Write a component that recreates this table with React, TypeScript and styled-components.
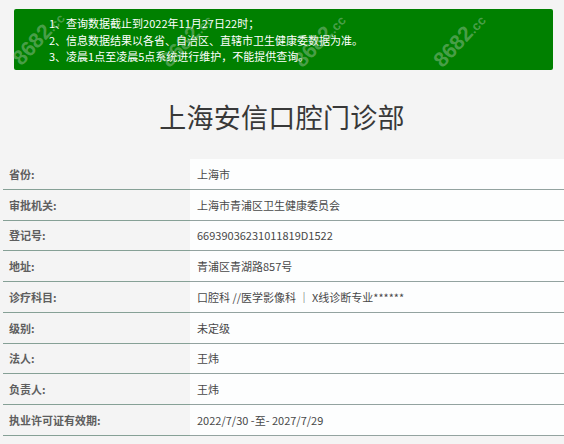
import React from "react";
import styled, { createGlobalStyle } from "styled-components";

const Global = createGlobalStyle`
  html, body { margin: 0; padding: 0; background: #f4f4f4; }
  body { font-family: "Microsoft YaHei", "Noto Sans CJK SC", "Noto Sans", sans-serif; overflow: hidden; }
`;

const Page = styled.div`
  position: relative;
  width: 564px;
  height: 444px;
  background: #f4f4f4;
  overflow: hidden;
`;

const Notice = styled.div`
  margin: 9px 11px 0 14px;
  height: 61px;
  box-sizing: border-box;
  background: #008000;
  border-radius: 2px;
  padding: 6px 0 0 35px;
  color: #ffffff;
  font-size: 11px;
  line-height: 16.5px;
`;

const NoticeLine = styled.div`
  white-space: nowrap;
`;

const Title = styled.h1`
  margin: 0;
  padding: 27px 0 0;
  height: 89px;
  box-sizing: border-box;
  text-align: center;
  font-weight: 400;
  font-size: 27px;
  line-height: 40px;
  color: #383838;
  letter-spacing: 0.3px;
`;

const Table = styled.div`
  margin-left: 3px;
  display: grid;
  grid-template-columns: 187px 1fr;
`;

const Label = styled.div`
  height: 29.75px;
  display: flex;
  align-items: center;
  padding-left: 6px;
  font-size: 11px;
  font-weight: 600;
  color: #5e5e5e;
  border-bottom: 1.25px solid #86a096;
`;

const Value = styled.div`
  height: 29.75px;
  display: flex;
  align-items: center;
  padding-left: 7px;
  background: #fdfefe;
  font-size: 11px;
  color: #484848;
  border-bottom: 1.25px solid #93a3a0;
  white-space: nowrap;
`;

const Watermark = styled.div<{ $x: number; $y: number }>`
  position: absolute;
  left: ${(p) => p.$x}px;
  top: ${(p) => p.$y}px;
  transform: rotate(-47deg);
  transform-origin: center;
  font-family: "Liberation Sans", Arial, sans-serif;
  font-weight: 700;
  font-size: 21px;
  color: rgba(190, 210, 190, 0.4);
  pointer-events: none;
  white-space: nowrap;
  span { font-size: 13px; }
`;

const rows: [string, string][] = [
  ["省份:", "上海市"],
  ["审批机关:", "上海市青浦区卫生健康委员会"],
  ["登记号:", "66939036231011819D1522"],
  ["地址:", "青浦区青湖路857号"],
  ["诊疗科目:", "口腔科 //医学影像科 ｜ X线诊断专业******"],
  ["级别:", "未定级"],
  ["法人:", "王炜"],
  ["负责人:", "王炜"],
  ["执业许可证有效期:", "2022/7/30 -至- 2027/7/29"],
];

const marks = [
  { x: 6, y: 26 },
  { x: 154, y: 28 },
  { x: 287, y: 28 },
  { x: 427, y: 28 },
];

export default function App() {
  return (
    <Page>
      <Global />
      <Notice>
        <NoticeLine>1、查询数据截止到2022年11月27日22时；</NoticeLine>
        <NoticeLine>2、信息数据结果以各省、自治区、直辖市卫生健康委数据为准。</NoticeLine>
        <NoticeLine>3、凌晨1点至凌晨5点系统进行维护，不能提供查询。</NoticeLine>
      </Notice>
      <Title>上海安信口腔门诊部</Title>
      <Table>
        {rows.map(([l, v]) => (
          <React.Fragment key={l}>
            <Label>{l}</Label>
            <Value>{v}</Value>
          </React.Fragment>
        ))}
      </Table>
      {marks.map((m, i) => (
        <Watermark key={i} $x={m.x} $y={m.y}>
          8682<span>.cc</span>
        </Watermark>
      ))}
    </Page>
  );
}
